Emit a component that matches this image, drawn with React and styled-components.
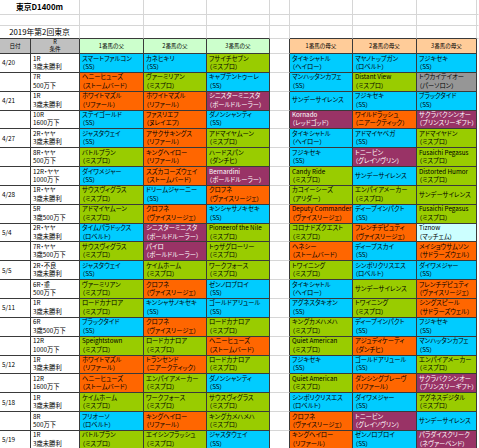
import React from "react";
import styled, { createGlobalStyle } from "styled-components";

const GlobalStyle = createGlobalStyle`
  html, body { margin: 0; padding: 0; background: #fff; }
  body {
    font-family: "Noto Sans CJK JP", "Noto Sans", sans-serif;
    font-feature-settings: "palt";
    color: #000;
    overflow: hidden;
  }
`;

const COLS = "31px 49px 64px 63px 63px 20px 63px 64px 60px 1fr";
const DARK = "#3a3a3a";
const LIGHT = "#d6d6d6";

const FILL = {
  B: "#00ccff",
  G: "#99cc00",
  O: "#ff6600",
  P: "#993366",
  Y: "#969696",
  C: "#ccffff",
};

const Sheet = styled.div`
  width: 479px;
  height: 448px;
  overflow: hidden;
`;

const Line = styled.div`
  display: grid;
  grid-template-columns: ${COLS};
  height: ${(p) => p.$h}px;
`;

const GridCell = styled.div`
  box-sizing: border-box;
  grid-column: span ${(p) => p.$span || 1};
  border-right: 1px solid ${(p) => (p.$noRight ? "transparent" : LIGHT)};
  border-bottom: 1px solid ${(p) => (p.$dark ? DARK : LIGHT)};
  display: flex;
  align-items: center;
  justify-content: center;
  white-space: nowrap;
`;

const Title = styled.span`
  font-size: 7.8px;
  line-height: 12px;
  font-weight: 700;
`;

const SubTitle = styled.span`
  font-size: 7.8px;
  line-height: 12px;
`;

const HeadCell = styled.div`
  box-sizing: border-box;
  background: ${(p) => p.$bg};
  border-right: 1px solid ${DARK};
  border-bottom: 1px solid ${DARK};
  display: flex;
  flex-direction: column;
  align-items: center;
  justify-content: center;
  font-size: 5.6px;
  line-height: 8.2px;
  white-space: nowrap;
`;

const HeadLine = styled.span`
  display: block;
  height: 7px;
  line-height: 7px;
`;

const GapCell = styled.div`
  box-sizing: border-box;
  border-right: 1px solid ${DARK};
  border-bottom: 1px solid ${LIGHT};
`;

const Blank = styled.div``;

const DateCell = styled.div`
  box-sizing: border-box;
  border-right: 1px solid ${DARK};
  border-bottom: 1px solid ${DARK};
  display: flex;
  align-items: center;
  padding-left: 2px;
  font-size: 6.4px;
`;

const TextCell = styled.div`
  box-sizing: border-box;
  background: ${(p) => p.$bg || "#fff"};
  color: ${(p) => p.$fg || "#000"};
  border-right: 1px solid ${DARK};
  border-bottom: 1px solid ${DARK};
  display: flex;
  flex-direction: column;
  justify-content: center;
  padding-left: 2px;
  font-size: 6.3px;
  line-height: 8.4px;
  white-space: nowrap;
  overflow: hidden;
`;

const ROWS = [
  ["4/20", "1R", "3歳未勝利",
    [["スマートファルコン", "SS", "B"], ["カネヒキリ", "SS", "B"], ["フサイチセブン", "ミスプロ", "G"]],
    [["タイキシャトル", "ヘイロー", "B"], ["マヤノトップガン", "ロベルト", "B"], ["フジキセキ", "SS", "B"]]],
  ["", "7R", "500万下",
    [["ヘニーヒューズ", "ストームバード", "O"], ["ヴァーミリアン", "ミスプロ", "G"], ["キャプテントゥーレ", "SS", "B"]],
    [["マンハッタンカフェ", "SS", "B"], ["Distant View", "ミスプロ", "G"], ["トウカイテイオー", "パーソロン", "Y"]]],
  ["4/21", "1R", "3歳未勝利",
    [["ホワイトマズル", "リファール", "O"], ["ホワイトマズル", "リファール", "O"], ["シニスターミニスタ", "ボールドルーラー", "P"]],
    [["サンデーサイレンス", null, "B"], ["フジキセキ", "SS", "B"], ["ブラックタイド", "SS", "B"]]],
  ["", "10R", "1600万下",
    [["ステイゴールド", "SS", "B"], ["ファスリエフ", "ヌレイエフ", "O"], ["ダノンシャンティ", "SS", "B"]],
    [["Kornado", "レッドゴッド", "P"], ["ワイルドラッシュ", "ニアークティック", "O"], ["サクラバクシンオー", "プリンスリーギフト", "P"]]],
  ["4/27", "2R・ヤヤ", "3歳未勝利",
    [["ジャスタウェイ", "SS", "B"], ["アサクサキングス", "リファール", "O"], ["アドマイヤムーン", "ミスプロ", "G"]],
    [["タイキシャトル", "ヘイロー", "B"], ["アドマイヤベガ", "SS", "B"], ["アドマイヤドン", "ミスプロ", "G"]]],
  ["", "8R・ヤヤ", "500万下",
    [["バトルプラン", "ミスプロ", "G"], ["キングヘイロー", "リファール", "O"], ["ハードスパン", "ダンチヒ", "G"]],
    [["フジキセキ", "SS", "B"], ["トニービン", "グレイソヴリン", "P"], ["Fusaichi Pegasus", "ミスプロ", "G"]]],
  ["", "12R・ヤヤ", "1000万下",
    [["ダイワメジャー", "SS", "B"], ["スズカコーズウェイ", "ストームバード", "O"], ["Bernardini", "ボールドルーラー", "P"]],
    [["Candy Ride", "ミスプロ", "G"], ["サンデーサイレンス", null, "B"], ["Distorted Humor", "ミスプロ", "G"]]],
  ["4/28", "1R・ヤヤ", "3歳未勝利",
    [["サウスヴィグラス", "ミスプロ", "G"], ["ドリームジャーニー", "SS", "B"], ["クロフネ", "ヴァイスリージェ", "O"]],
    [["カコイーシーズ", "アリダー", "G"], ["エンパイアメーカー", "ミスプロ", "G"], ["サンデーサイレンス", null, "G"]]],
  ["", "5R", "3歳500万下",
    [["アドマイヤムーン", "ミスプロ", "G"], ["クロフネ", "ヴァイスリージェ", "O"], ["キンシャサノキセキ", "SS", "B"]],
    [["Deputy Commander", "ヴァイスリージェ", "O"], ["ディープインパクト", "SS", "B"], ["Fusaichi Pegasus", "ミスプロ", "G"]]],
  ["5/4", "2R・ヤヤ", "3歳未勝利",
    [["タイムパラドックス", "ロベルト", "B"], ["シニスターミニスタ", "ボールドルーラー", "P"], ["Pioneerof the Nile", "ミスプロ", "G"]],
    [["コロナドズクエスト", "ミスプロ", "G"], ["フレンチデピュティ", "ヴァイスリージェ", "O"], ["Tiznow", "マッチェム", "C"]]],
  ["", "7R・ヤヤ", "3歳500万下",
    [["サウスヴィグラス", "ミスプロ", "G"], ["パイロ", "ボールドルーラー", "P"], ["トゥザグローリー", "ミスプロ", "G"]],
    [["ヘネシー", "ストームバード", "O"], ["ディープスカイ", "SS", "B"], ["メイショウサムソン", "サドラーズウェル", "O"]]],
  ["5/5", "2R・不良", "3歳未勝利",
    [["ジャスタウェイ", "SS", "B"], ["ケイムホーム", "ミスプロ", "G"], ["ワークフォース", "ミスプロ", "G"]],
    [["トワイニング", "ミスプロ", "G"], ["シンボリクリスエス", "ロベルト", "B"], ["ダイワメジャー", "SS", "B"]]],
  ["", "6R・重", "500万下",
    [["ヴァーミリアン", "ミスプロ", "G"], ["クロフネ", "ヴァイスリージェ", "O"], ["ゼンノロブロイ", "SS", "B"]],
    [["タイキシャトル", "ヘイロー", "B"], ["サンデーサイレンス", null, "G"], ["フレンチデピュティ", "ヴァイスリージェ", "O"]]],
  ["5/11", "1R", "3歳未勝利",
    [["ロードカナロア", "ミスプロ", "G"], ["キンシャサノキセキ", "SS", "B"], ["ゴールドアリュール", "SS", "B"]],
    [["アグネスタキオン", "SS", "B"], ["トワイニング", "ミスプロ", "G"], ["シングスピール", "サドラーズウェル", "O"]]],
  ["", "6R", "3歳500万下",
    [["ブラックタイド", "SS", "B"], ["クロフネ", "ヴァイスリージェ", "O"], ["ロードカナロア", "ミスプロ", "G"]],
    [["キングカメハメハ", "ミスプロ", "G"], ["ディープインパクト", "SS", "B"], ["フジキセキ", "SS", "B"]]],
  ["", "12R", "1000万下",
    [["Speightstown", "ミスプロ", "G"], ["ロードカナロア", "ミスプロ", "G"], ["ヘニーヒューズ", "ストームバード", "O"]],
    [["Quiet American", "ミスプロ", "G"], ["アジュディケーティ", "ダンチヒ", "O"], ["マンハッタンカフェ", "SS", "B"]]],
  ["5/12", "1R", "3歳未勝利",
    [["ホワイトマズル", "リファール", "O"], ["トランセンド", "ニアークティック", "O"], ["ロードカナロア", "ミスプロ", "G"]],
    [["フジキセキ", "SS", "B"], ["ゴールドアリュール", "SS", "B"], ["エンパイアメーカー", "ミスプロ", "G"]]],
  ["", "12R", "1600万下",
    [["ヘニーヒューズ", "ストームバード", "O"], ["エンパイアメーカー", "ミスプロ", "G"], ["ダノンシャンティ", "SS", "B"]],
    [["Quiet American", "ミスプロ", "G"], ["ダンシングブレーヴ", "リファール", "O"], ["サクラバクシンオー", "プリンスリーギフト", "P"]]],
  ["5/18", "1R", "3歳未勝利",
    [["ケイムホーム", "ミスプロ", "G"], ["ワークフォース", "ミスプロ", "G"], ["サウスヴィグラス", "ミスプロ", "G"]],
    [["シンボリクリスエス", "ロベルト", "B"], ["ダイワメジャー", "SS", "B"], ["アグネスデジタル", "ミスプロ", "G"]]],
  ["", "8R", "500万下",
    [["フリオーソ", "ロベルト", "B"], ["キングヘイロー", "リファール", "O"], ["キングカメハメハ", "ミスプロ", "G"]],
    [["クロフネ", "ヴァイスリージェ", "O"], ["トニービン", "グレイソヴリン", "P"], ["サンデーサイレンス", null, "B"]]],
  ["5/19", "1R", "3歳未勝利",
    [["バトルプラン", "ミスプロ", "G"], ["エイシンフラッシュ", "ミスプロ", "G"], ["ジャスタウェイ", "SS", "B"]],
    [["キングヘイロー", "リファール", "O"], ["ゼンノロブロイ", "SS", "B"], ["パラダイスクリーク", "ネヴァーベンド", "P"]]],
];

function Horse({ item }) {
  const [name, line, c] = item;
  return (
    <TextCell $bg={FILL[c]} $fg={c === "P" ? "#fff" : "#000"}>
      <div>{name}</div>
      {line && <div>（{line}）</div>}
    </TextCell>
  );
}

function TopRow({ h, dark, children }) {
  return (
    <Line $h={h}>
      <GridCell $span={2} $dark={dark}>{children}</GridCell>
      {[0, 1, 2].map((i) => <GridCell key={"a" + i} $dark={dark} />)}
      <GridCell />
      {[0, 1, 2].map((i) => <GridCell key={"b" + i} $dark={dark} />)}
      <GridCell $noRight />
    </Line>
  );
}

export default function App() {
  return (
    <Sheet>
      <GlobalStyle />
      <TopRow h={15}><Title>東京D1400m</Title></TopRow>
      <TopRow h={11} />
      <TopRow h={13} dark><SubTitle>2019年第2回東京</SubTitle></TopRow>
      <Line $h={15}>
        <HeadCell $bg="#c0c0c0">日付</HeadCell>
        <HeadCell $bg="#c0c0c0">
          <HeadLine>R</HeadLine>
          <HeadLine>条件</HeadLine>
        </HeadCell>
        <HeadCell $bg="#ccffcc">1番馬の父</HeadCell>
        <HeadCell $bg="#ccffcc">2番馬の父</HeadCell>
        <HeadCell $bg="#ccffcc">3番馬の父</HeadCell>
        <GapCell />
        <HeadCell $bg="#ffcc99">1番馬の母父</HeadCell>
        <HeadCell $bg="#ffcc99">2番馬の母父</HeadCell>
        <HeadCell $bg="#ffcc99">3番馬の母父</HeadCell>
        <Blank />
      </Line>
      {ROWS.map(([date, r, cond, sires, dams], i) => (
        <Line key={i} $h={18.85}>
          <DateCell>{date}</DateCell>
          <TextCell>
            <div>{r}</div>
            <div>{cond}</div>
          </TextCell>
          {sires.map((s, j) => <Horse key={"s" + j} item={s} />)}
          <GapCell />
          {dams.map((s, j) => <Horse key={"d" + j} item={s} />)}
          <Blank />
        </Line>
      ))}
    </Sheet>
  );
}
